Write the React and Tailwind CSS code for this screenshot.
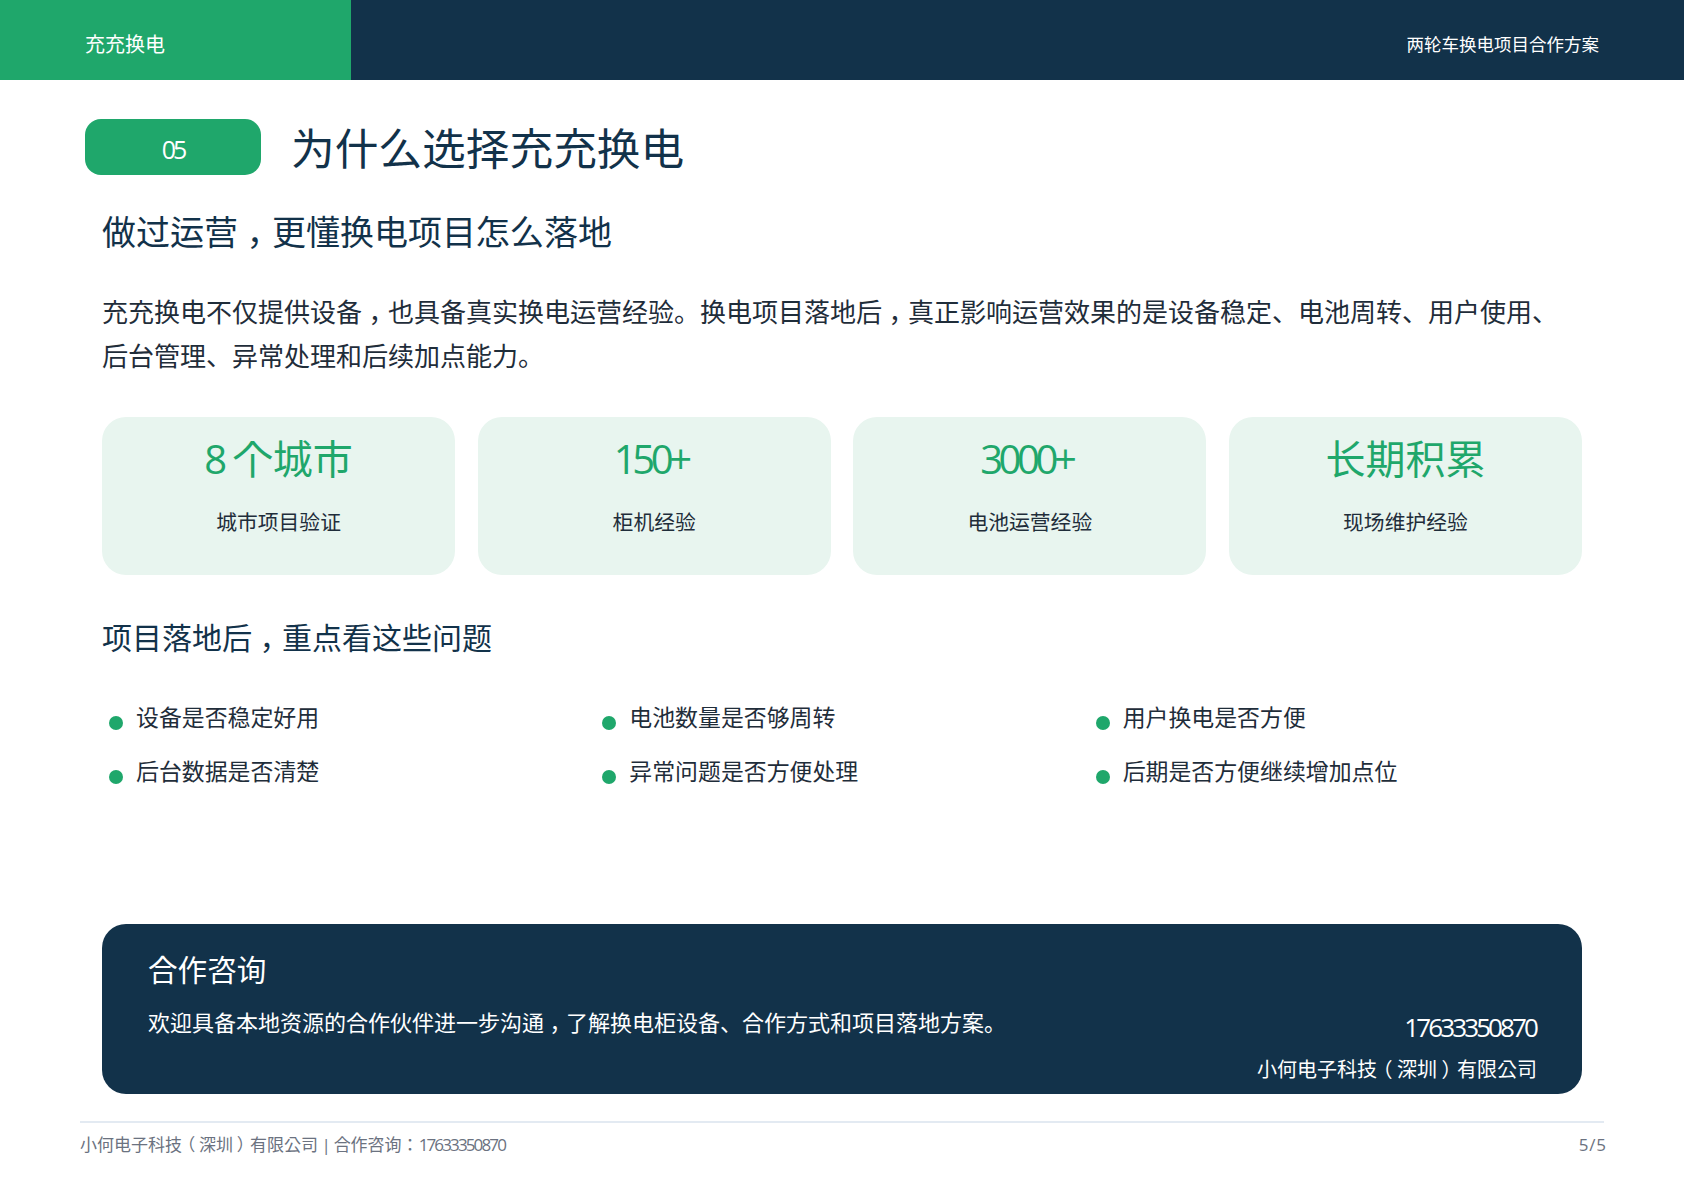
const stats = [
  { value: '8 个城市', label: '城市项目验证' },
  { value: '150+', label: '柜机经验', latin: true },
  { value: '3000+', label: '电池运营经验', latin: true },
  { value: '长期积累', label: '现场维护经验' },
];

const checks = [
  '设备是否稳定好用',
  '电池数量是否够周转',
  '用户换电是否方便',
  '后台数据是否清楚',
  '异常问题是否方便处理',
  '后期是否方便继续增加点位',
];

// fullwidth punctuation sits centred in its box in the design, latin runs are set tight
function T({ children }) {
  return children.split(/(.（|[，）]| \| |[0-9+/][0-9+/ ]*)/).filter(Boolean).map((part, i) => {
    if (part === '，') return <span key={i} className="pl-[0.25em] tracking-[-0.25em]">{part}</span>;
    if (part === '）') return <span key={i} className="pl-[0.22em] tracking-[-0.22em]">{part}</span>;
    if (part === ' | ') return <span key={i} className="tracking-[-0.05em]">{part}</span>;
    if (part.endsWith('（')) {
      return (
        <span key={i}>
          <span className="tracking-[-0.22em]">{part[0]}</span>
          <span className="pr-[0.22em]">（</span>
        </span>
      );
    }
    if (part.endsWith(' ')) return <span key={i} className="tracking-[-0.06em]">{part}</span>;
    if (/^[0-9+/]/.test(part)) return <span key={i} className="tracking-[-0.11em]">{part}</span>;
    return part;
  });
}

export default function App() {
  return (
    <div className="w-[1684px] h-[1191px] bg-white font-['Open_Sans','Noto_Sans_CJK_KR',sans-serif] text-[#12324a] overflow-hidden">
      <header className="flex h-[79.5px] bg-[#12324a] text-white">
        <div className="w-[351px] bg-[#1fa76b] pl-[85px] text-[20px] leading-[90px]">充充换电</div>
        <div className="flex-1 pr-[85px] text-right text-[17.5px] leading-[89px]">两轮车换电项目合作方案</div>
      </header>

      <div className="mt-[39.5px] ml-[85px] flex items-start">
        <div className="w-[176px] h-[56px] rounded-2xl bg-[#1fa76b] text-center text-[25px] leading-[60px] tracking-[-3px] text-white">05</div>
        <h1 className="ml-[30px] pt-[1px] text-[43.7px] leading-[56px]">为什么选择充充换电</h1>
      </div>

      <main className="px-[102px]">
        <h2 className="mt-[33px] text-[34px] leading-[46px]"><T>做过运营，更懂换电项目怎么落地</T></h2>
        <p className="mt-[34.5px] text-[26px] leading-[44px] text-[#1f2d3a]">
          <T>充充换电不仅提供设备，也具备真实换电运营经验。换电项目落地后，真正影响运营效果的是设备稳定、电池周转、用户使用、</T>
          <br />
          后台管理、异常处理和后续加点能力。
        </p>

        <section className="mt-[39px] grid grid-cols-4 gap-[22.5px]">
          {stats.map((s) => (
            <div key={s.value} className="h-[158px] rounded-3xl bg-[#e8f5ef] pt-[15px] text-center">
              <div className={s.latin ? 'pr-[7px] text-[40px] leading-[54px] text-[#1fa76b]' : 'text-[40px] leading-[54px] text-[#1fa76b]'}><T>{s.value}</T></div>
              <div className="mt-[21px] text-[20.8px] leading-[30px] text-[#1f2d3a]">{s.label}</div>
            </div>
          ))}
        </section>

        <h3 className="mt-[43.5px] text-[30px] leading-[40px]"><T>项目落地后，重点看这些问题</T></h3>

        <ul className="mt-[44px] grid grid-cols-3 gap-y-[23px] text-[22.9px] leading-[31px] text-[#1f2d3a]">
          {checks.map((c) => (
            <li key={c} className="flex pl-[7px]">
              <span className="mt-[14px] mr-[13px] size-[14px] shrink-0 rounded-full bg-[#1fa76b]" />
              {c}
            </li>
          ))}
        </ul>

        <section className="mt-[137px] flex h-[170px] justify-between rounded-3xl bg-[#12324a] pl-[46px] pr-[45px] text-white">
          <div>
            <div className="mt-[26px] text-[29.6px] leading-[40px]">合作咨询</div>
            <div className="mt-[17px] text-[22px] leading-[30px]"><T>欢迎具备本地资源的合作伙伴进一步沟通，了解换电柜设备、合作方式和项目落地方案。</T></div>
          </div>
          <div className="text-right">
            <div className="mt-[85px] mr-[1px] text-[26px] leading-[36px] tracking-[-2.9px]">17633350870</div>
            <div className="mt-[11px] text-[20px] leading-[28px]"><T>小何电子科技（深圳）有限公司</T></div>
          </div>
        </section>
      </main>

      <footer className="mx-[80px] mt-[27px] flex justify-between border-t-2 border-[#e3eaf2] pt-[9.5px] text-[17px] leading-[24px] text-[#6b7280]">
        <div><T>小何电子科技（深圳）有限公司 | 合作咨询：17633350870</T></div>
        <div><T>5 / 5</T></div>
      </footer>
    </div>
  );
}
